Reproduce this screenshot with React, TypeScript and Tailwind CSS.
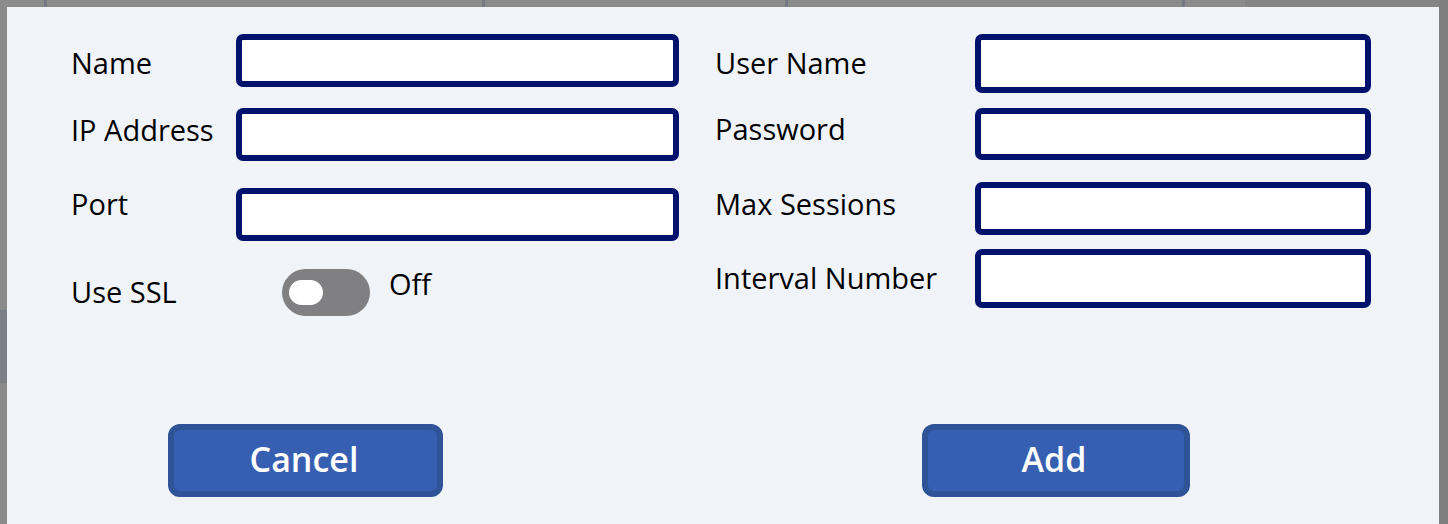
import React from "react";

const font = { fontFamily: '"Open Sans", "Noto Sans", sans-serif' };

function Input({ h, w }: { h: string; w: string }) {
  return (
    <div
      className={`${h} ${w} shrink-0 rounded-[7px] border-[6px] border-[#00126b] bg-white`}
    />
  );
}

export default function App() {
  return (
    <div
      className="relative h-[524px] w-[1448px] overflow-hidden bg-[#8b8b8b]"
      style={font}
    >
      {/* backdrop remnants */}
      <div className="absolute left-[44px] top-0 h-[7px] w-[3px] bg-[#777a84]" />
      <div className="absolute left-[482px] top-0 h-[7px] w-[3px] bg-[#777a84]" />
      <div className="absolute left-[785px] top-0 h-[7px] w-[3px] bg-[#777a84]" />
      <div className="absolute left-[1182px] top-0 h-[7px] w-[3px] bg-[#777a84]" />
      <div className="absolute left-[1245px] top-0 h-[7px] w-[203px] bg-[#848484]" />
      <div className="absolute right-0 top-0 h-[524px] w-[9px] bg-[#7f7f7f]" />
      <div className="absolute left-0 top-[310px] h-[73px] w-[7px] bg-[#7c7f88]" />

      <div className="relative ml-[7px] mt-[7px] h-[530px] w-[1432px] bg-[#f0f4f9] pt-[27px] text-[29px] leading-[28px] text-black">
        <div className="flex items-start">
          {/* left column */}
          <div className="flex flex-col pl-[64px]">
            <div className="flex items-start">
              <div className="mt-[15px] w-[165px]">Name</div>
              <Input h="h-[53px]" w="w-[443px]" />
            </div>
            <div className="mt-[21px] flex items-start">
              <div className="mt-[8px] w-[165px]">IP Address</div>
              <Input h="h-[53px]" w="w-[443px]" />
            </div>
            <div className="mt-[27px] flex items-start">
              <div className="mt-[2px] w-[165px]">Port</div>
              <Input h="h-[53px]" w="w-[443px]" />
            </div>
            <div className="mt-[28px] flex items-start">
              <div className="mt-[9px] w-[211px]">Use SSL</div>
              <div className="flex h-[47px] w-[88px] shrink-0 items-center rounded-full bg-[#808083] pl-[7px]">
                <div className="h-[25px] w-[34px] rounded-full bg-white" />
              </div>
              <div className="ml-[19px] mt-[1px]">Off</div>
            </div>
          </div>

          {/* right column */}
          <div className="ml-[36px] flex flex-col">
            <div className="flex items-start">
              <div className="mt-[15px] w-[260px]">User Name</div>
              <Input h="h-[59px]" w="w-[396px]" />
            </div>
            <div className="mt-[15px] flex items-start">
              <div className="mt-[7px] w-[260px]">Password</div>
              <Input h="h-[52px]" w="w-[396px]" />
            </div>
            <div className="mt-[22px] flex items-start">
              <div className="mt-[8px] w-[260px]">Max Sessions</div>
              <Input h="h-[53px]" w="w-[396px]" />
            </div>
            <div className="mt-[14px] flex items-start">
              <div className="mt-[15px] w-[260px]">Interval Number</div>
              <Input h="h-[59px]" w="w-[396px]" />
            </div>
          </div>
        </div>

        {/* buttons */}
        <div className="mt-[108px] flex pl-[161px]">
          <button className="flex h-[73px] w-[275px] items-center justify-center rounded-[12px] border-[6px] border-[#2f5397] bg-[#375fb1] pb-[4px] pr-[3px] text-[34px] font-semibold text-white">
            Cancel
          </button>
          <button className="ml-[479px] flex h-[73px] w-[268px] items-center justify-center rounded-[12px] border-[6px] border-[#2f5397] bg-[#375fb1] pb-[4px] pr-[4px] text-[34px] font-semibold text-white">
            Add
          </button>
        </div>
      </div>
    </div>
  );
}
